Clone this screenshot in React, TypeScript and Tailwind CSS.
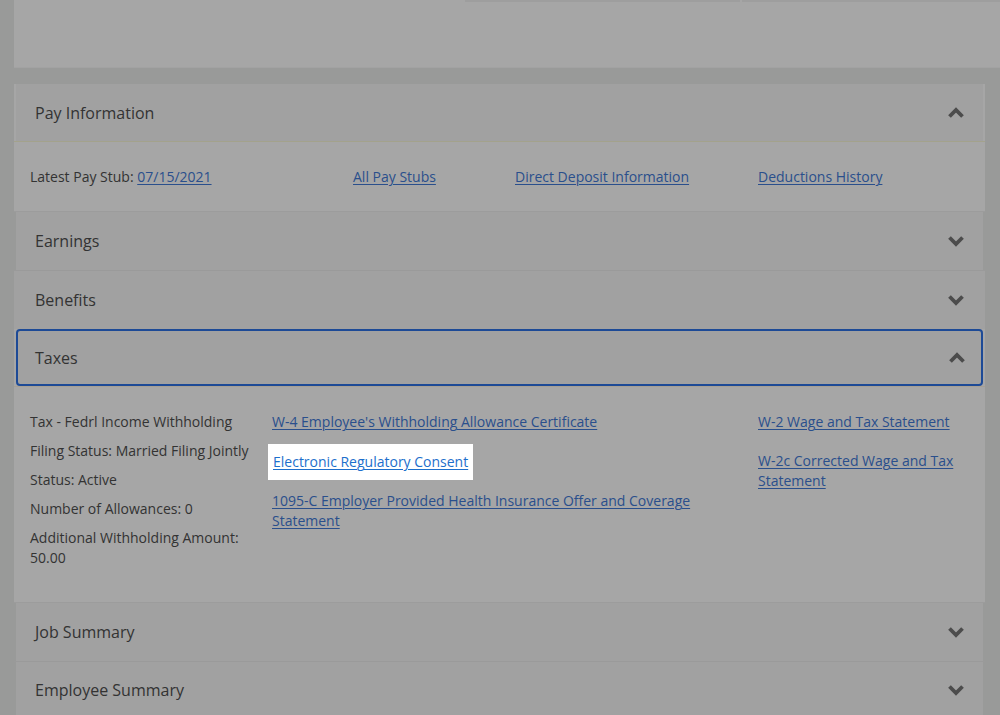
const font = "font-['Open_Sans',sans-serif]";
const link = "text-[#2a4f8c] underline underline-offset-2 decoration-1";

function Chevron({ up }: { up?: boolean }) {
  return (
    <svg width="16" height="12" viewBox="0 0 16 12" className="block">
      <path
        d={up ? "M1.5 9.5 L8 3 L14.5 9.5" : "M1.5 2.5 L8 9 L14.5 2.5"}
        fill="none"
        stroke="#4c4c4c"
        strokeWidth="3.8"
        strokeLinejoin="miter"
      />
    </svg>
  );
}

function Header({
  title,
  up,
  active,
  h = "h-[58px]",
}: {
  title: string;
  up?: boolean;
  active?: boolean;
  h?: string;
}) {
  return (
    <div
      className={`mx-[2px] flex ${h} items-center justify-between bg-[#a1a1a1] ${
        active
          ? "rounded-[4px] border-2 border-[#1d4a96] pl-[17px] pr-[16px]"
          : "pl-[19px] pr-[19px]"
      }`}
    >
      <span className="text-[16px] text-[#333]">{title}</span>
      <Chevron up={up} />
    </div>
  );
}

export default function App() {
  return (
    <div className={`${font} h-[715px] w-[1000px] overflow-hidden bg-[#999a99]`}>
      {/* top card (cut off) */}
      <div className="ml-[14px] h-[68px] border-b border-[#a2a2a2] bg-[#a6a6a6]">
        <div className="ml-[451px] flex h-[2px]">
          <div className="w-[275px] bg-[#9e9e9e]" />
          <div className="w-[2px] bg-[#a6a6a6]" />
          <div className="flex-1 bg-[#9e9e9e]" />
        </div>
      </div>

      <div className="ml-[14px] mr-[15px] mt-[16px]">
        {/* Pay information */}
        <div className="bg-[#a6a6a6]">
          <Header title="Pay Information" up h="h-[57px]" />
          <div className="h-[1px] bg-[#a3a28c]" />
          <div className="flex h-[70px] items-center border-b border-[#9c9c9c] pl-[16px] text-[14px] text-[#333]">
            <div className="w-[323px]">
              Latest Pay Stub: <span className={link}>07/15/2021</span>
            </div>
            <div className="w-[162px]">
              <span className={link}>All Pay Stubs</span>
            </div>
            <div className="w-[243px]">
              <span className={link}>Direct Deposit Information</span>
            </div>
            <div>
              <span className={link}>Deductions History</span>
            </div>
          </div>
        </div>

        <div className="border-b border-[#9a9a9a]">
          <Header title="Earnings" />
        </div>
        <div className="bg-[#a1a1a1]">
          <Header title="Benefits" h="h-[58px]" />
        </div>

        {/* Taxes */}
        <div className="bg-[#a6a6a6]">
          <Header title="Taxes" up active h="h-[57px]" />
          <div className="h-[1px] bg-[#a8a093]" />
          <div className="flex h-[216px] border-b border-[#9c9c9c] pl-[16px] pt-[25px] text-[14px] leading-[20px] text-[#333]">
            <div className="flex w-[242px] flex-col gap-[9px]">
              <div>Tax - Fedrl Income Withholding</div>
              <div>Filing Status: Married Filing Jointly</div>
              <div>Status: Active</div>
              <div>Number of Allowances: 0</div>
              <div className="w-[220px]">Additional Withholding Amount: 50.00</div>
            </div>
            <div className="flex w-[486px] flex-col">
              <div className="w-[440px]">
                <span className={link}>W-4 Employee's Withholding Allowance Certificate</span>
              </div>
              <div className="-ml-[4px] mt-[12px] self-start bg-white px-[5px] py-[8px]">
                <span className="text-[#1d6fcc] underline underline-offset-2 decoration-1">
                  Electronic Regulatory Consent
                </span>
              </div>
              <div className="mt-[11px] w-[440px]">
                <span className={link}>
                  1095-C Employer Provided Health Insurance Offer and Coverage Statement
                </span>
              </div>
            </div>
            <div className="flex w-[205px] flex-col gap-[19px]">
              <div>
                <span className={link}>W-2 Wage and Tax Statement</span>
              </div>
              <div>
                <span className={link}>W-2c Corrected Wage and Tax Statement</span>
              </div>
            </div>
          </div>
        </div>

        <div className="border-b border-[#9a9a9a]">
          <Header title="Job Summary" />
        </div>
        <div>
          <Header title="Employee Summary" h="h-[56px]" />
        </div>
      </div>
    </div>
  );
}
